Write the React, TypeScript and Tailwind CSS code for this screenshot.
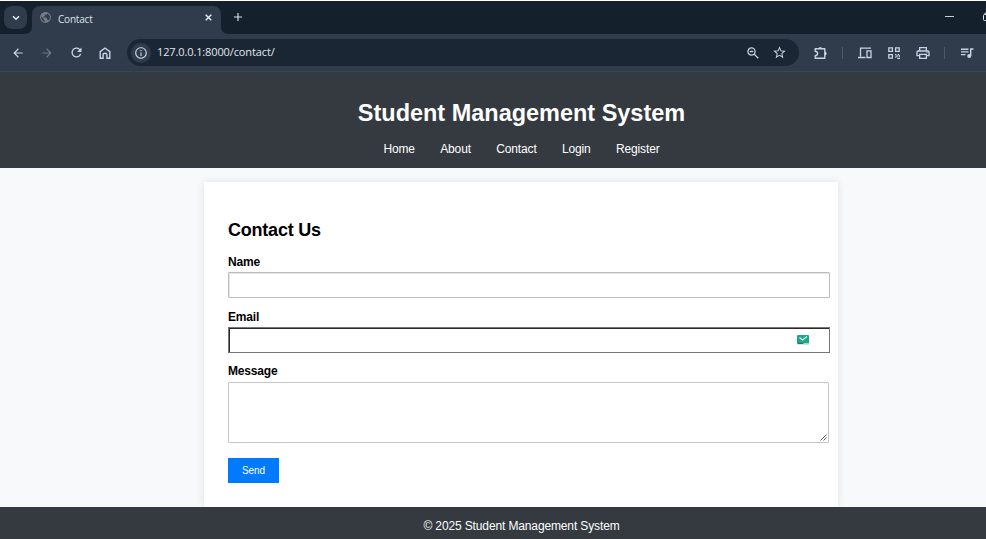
import type { ReactNode } from 'react';
import {
  MdArrowBack,
  MdArrowForward,
  MdRefresh,
  MdOutlineInfo,
  MdStarOutline,
  MdOutlinePrint,
  MdPublic,
  MdAdd,
} from 'react-icons/md';

function ToolIcon({ children, className = '' }: { children: ReactNode; className?: string }) {
  return <span className={`flex size-4 shrink-0 items-center justify-center ${className}`}>{children}</span>;
}

function TabStrip() {
  return (
    <div className="flex h-[33px] shrink-0 bg-[#15202d] pl-1">
      <div className="mt-[5px] flex h-[23px] w-[23px] items-center justify-center rounded-lg bg-[#303b4b]">
        <svg width="8" height="6" viewBox="0 0 8 6" fill="none" stroke="#e3e8f0" strokeWidth="1.6">
          <path d="M1 1.2 4 4.2 7 1.2" />
        </svg>
      </div>
      <div className="relative ml-[5px] mt-[5px] flex h-7 w-[189px] items-center rounded-t-lg bg-[#303b4b] pl-[7px] pr-[9px] text-[#dce2ea]">
        <svg className="absolute -left-2 bottom-0" width="8" height="8" viewBox="0 0 8 8" fill="#303b4b">
          <path d="M8 0V8H0Q8 8 8 0Z" />
        </svg>
        <svg className="absolute -right-2 bottom-0" width="8" height="8" viewBox="0 0 8 8" fill="#303b4b">
          <path d="M0 0V8H8Q0 8 0 0Z" />
        </svg>
        <MdPublic size={13} className="mb-[5px] text-[#747b85]" />
        <span className="mb-[2px] ml-1.5 grow font-['Open_Sans',sans-serif] text-[10px] tracking-[-0.2px]">Contact</span>
        <svg className="mb-[5px]" width="7" height="7" viewBox="0 0 7 7" stroke="#e3e8f0" strokeWidth="1.5">
          <path d="M0.7 0.7 6.3 6.3M6.3 0.7 0.7 6.3" />
        </svg>
      </div>
      <MdAdd size={14} className="ml-[10px] mt-[9px] text-[#d7dde7]" />
      <div className="ml-auto mt-[14px] flex w-[41px] shrink-0">
        <div className="mt-px h-px w-[9px] bg-[#c9ced5]" />
        <svg className="-mt-[3px] ml-7" width="4" height="10" viewBox="0 0 4 10" fill="none" stroke="#e1e5ea">
          <path d="M4 2.5H2.5Q1.5 2.5 1.5 3.5V7.5Q1.5 8.5 2.5 8.5H4M3 2V1H4" />
        </svg>
      </div>
    </div>
  );
}

function Toolbar() {
  return (
    <div className="flex h-[38px] shrink-0 items-center border-b border-[#3d4550] bg-[#303b4b] pl-[10px] text-[#c9d3e5]">
      <ToolIcon><MdArrowBack size={14} /></ToolIcon>
      <ToolIcon className="ml-[13px] text-[#6e7989]"><MdArrowForward size={14} /></ToolIcon>
      <ToolIcon className="ml-[13px]"><MdRefresh size={15} /></ToolIcon>
      <ToolIcon className="ml-[13px]">
        <svg width="12" height="12" viewBox="0 0 12 12" fill="none" stroke="currentColor" strokeWidth="1.4">
          <path d="M1.2 4.6 6 1 10.8 4.6V11.2H7.9V7.8Q7.9 6.2 6 6.2T4.1 7.8V11.2H1.2Z" />
        </svg>
      </ToolIcon>
      <div className="ml-[14px] flex h-[27px] w-[672px] shrink-0 items-center rounded-full bg-[#1b2635] pl-1 pr-3">
        <span className="flex size-5 items-center justify-center rounded-full bg-[#303b4b]">
          <MdOutlineInfo size={14} />
        </span>
        <span className="ml-[6px] grow font-['Open_Sans',sans-serif] text-[11px] tracking-[-0.12px] text-[#e2e6ec]">127.0.0.1:8000/contact/</span>
        <svg width="12" height="12" viewBox="0 0 12 12" fill="none" stroke="currentColor" strokeWidth="1.3">
          <circle cx="4.5" cy="4.5" r="3.6" />
          <path d="M7.1 7.1 11.3 11.3M2.8 4.5H6.2" />
        </svg>
        <MdStarOutline size={15} className="ml-[13px]" />
      </div>
      <ToolIcon className="ml-[14px]">
        <svg width="14" height="14" viewBox="0 0 14 14" fill="none" stroke="currentColor" strokeWidth="1.4">
          <path d="M1.2 2.8H10.8V12.3H1.2V9.8Q3.6 9.5 3.6 7.5T1.2 5.2Z" strokeLinejoin="round" />
          <path d="M4.5 2.6A1.7 1.7 0 0 1 7.9 2.6ZM11 5.8A1.7 1.7 0 0 1 11 9.2Z" fill="currentColor" stroke="none" />
        </svg>
      </ToolIcon>
      <div className="ml-[13px] h-3 w-px bg-[#4b5869]" />
      <ToolIcon className="ml-[14px]">
        <svg width="14" height="12" viewBox="0 0 14 12" fill="none" stroke="currentColor" strokeWidth="1.3">
          <path d="M13 1.2H2.5V9.5M0 10.5H7.5M9 3.8H13V10.5H9Z" />
        </svg>
      </ToolIcon>
      <ToolIcon className="ml-[13px]">
        <svg width="12" height="12" viewBox="0 0 12 12" fill="none" stroke="currentColor" strokeWidth="1.3">
          <path d="M0.8 0.8H4.4V4.4H0.8ZM7.6 0.8H11.2V4.4H7.6ZM0.8 7.6H4.4V11.2H0.8Z" />
          <path d="M7 7.6H8.4M9.8 7.6H11.2M8.4 9H9.8M7 10.2H8.4M10.6 9H12M9.2 11.3H12" />
        </svg>
      </ToolIcon>
      <ToolIcon className="ml-[13px]"><MdOutlinePrint size={16} /></ToolIcon>
      <div className="ml-[13px] h-3 w-px bg-[#4b5869]" />
      <ToolIcon className="ml-[14px]">
        <svg width="14" height="12" viewBox="0 0 14 12" fill="none" stroke="currentColor" strokeWidth="1.4">
          <path d="M1 2.2H8.5M1 4.9H8.5M1 7.6H5.5M10.7 9V2H13.5" />
          <circle cx="9.2" cy="9" r="2" fill="currentColor" stroke="none" />
        </svg>
      </ToolIcon>
    </div>
  );
}

const links = ['Home', 'About', 'Contact', 'Login', 'Register'];

function SiteHeader() {
  return (
    <header className="flex h-24 shrink-0 flex-col items-center bg-[#343a40] pt-[26px] text-white">
      <h1 className="text-[23.47px] leading-[30px] font-bold whitespace-nowrap">Student Management System</h1>
      <nav className="mt-[13px] flex gap-[25.3px] text-[12px] leading-4 tracking-[-0.13px]">
        {links.map((link) => (
          <a key={link}>{link}</a>
        ))}
      </nav>
    </header>
  );
}

function MailBadge() {
  return (
    <svg width="12" height="10" viewBox="0 0 12 10">
      <path d="M0 1Q0 0 1 0H11Q12 0 12 1V10H0Z" fill="#1fa58b" />
      <path d="M2.5 2.5 5.5 5 10 1.5" fill="none" stroke="#d6fff4" strokeWidth="1.1" />
      <path d="M0 8H12V10H0Z" fill="#c9efe6" />
      <path d="M7 8H12V9.5H7Z" fill="#8ee5cf" />
      <path d="M0.5 8.5H6.5" stroke="#46635e" strokeWidth="1" />
    </svg>
  );
}

function ContactForm() {
  return (
    <main className="ml-[204px] mt-[14px] flex w-[634px] grow flex-col bg-white pl-6 shadow-[0_0_8px_rgba(0,0,0,0.1)]">
      <h2 className="mt-[37px] text-[18px] leading-[23px] font-bold tracking-[-0.22px]">Contact Us</h2>
      <label className="mt-[12px] text-[12px] leading-4 font-bold tracking-[-0.17px]">Name</label>
      <div className="mt-[2px] h-[26px] w-[602px] rounded-[1px] border border-[#bdbdbd] shadow-[inset_1px_1px_0_#e6e6e6]" />
      <label className="mt-[11px] text-[12px] leading-4 font-bold tracking-[-0.17px]">Email</label>
      <div className="mt-[2px] flex h-[26px] w-[602px] items-center justify-end border border-[#767676] pr-5 shadow-[inset_1px_1px_0_#2b2b2b]">
        <MailBadge />
      </div>
      <label className="mt-[10px] text-[12px] leading-4 font-bold tracking-[-0.17px]">Message</label>
      <div className="mt-[3px] flex h-[61px] w-[601px] items-end justify-end rounded-[1px] border border-[#c5c5c5]">
        <svg className="mr-px mb-px" width="7" height="7" viewBox="0 0 7 7" stroke="#555" strokeWidth="0.9">
          <path d="M0.5 6.5 6.5 0.5M3.5 6.5 6.5 3.5" />
        </svg>
      </div>
      <button className="mt-[15px] h-[25px] w-[51px] bg-[#007bff] text-[10px] tracking-[-0.1px] text-white">Send</button>
    </main>
  );
}

export default function App() {
  return (
    <div className="h-[539px] w-[986px] overflow-hidden bg-[#f8f9fa]">
      <div className="flex h-[72px] flex-col border-t border-white">
        <TabStrip />
        <Toolbar />
      </div>
      <div className="flex h-[467px] w-[1043px] flex-col font-['Liberation_Sans',Arial,sans-serif] text-black">
        <SiteHeader />
        <ContactForm />
        <footer className="z-10 flex h-[32px] shrink-0 items-center justify-center bg-[#343a40] pt-[5px] text-[12px] tracking-[-0.13px] text-white">
          © 2025 Student Management System
        </footer>
      </div>
    </div>
  );
}
